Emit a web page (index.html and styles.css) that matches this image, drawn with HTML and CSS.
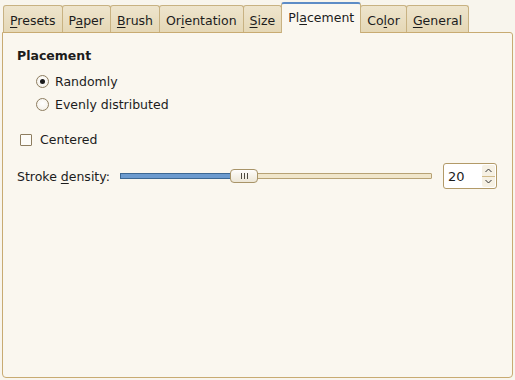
FILE: index.html
```html
<!DOCTYPE html>
<html lang="en">
<head>
    <meta charset="UTF-8">
    <title>Placement</title>
    <link rel="stylesheet" href="styles.css">
</head>
<body>

    <div class="notebook">
        <div class="tabs">
            <div class="tab"><u>P</u>resets</div>
            <div class="tab">P<u>a</u>per</div>
            <div class="tab"><u>B</u>rush</div>
            <div class="tab">Or<u>i</u>entation</div>
            <div class="tab"><u>S</u>ize</div>
            <div class="tab active">Pl<u>a</u>cement</div>
            <div class="tab">Co<u>l</u>or</div>
            <div class="tab"><u>G</u>eneral</div>
        </div>

        <div class="page">
            <div class="section-title">Placement</div>

            <div class="radio-group">
                <label class="radio checked"><span class="radio-mark"></span>Randomly</label>
                <label class="radio"><span class="radio-mark"></span>Evenly distributed</label>
            </div>

            <label class="check"><span class="check-mark"></span>Centered</label>

            <div class="density-row">
                <span class="density-label">Stroke <u>d</u>ensity:</span>
                <div class="slider">
                    <div class="trough">
                        <div class="trough-fill" style="width: 113px"></div>
                    </div>
                    <div class="handle" style="left: 110px">
                        <span class="grip"></span><span class="grip"></span><span class="grip"></span>
                    </div>
                </div>
                <div class="spin">
                    <span class="spin-value">20</span>
                    <div class="spin-buttons">
                        <span class="spin-btn">
                            <svg width="7" height="5" viewBox="0 0 7 5"><path d="M0.5 4 L3.5 1 L6.5 4" fill="none" stroke="#333" stroke-width="1"/></svg>
                        </span>
                        <span class="spin-btn down">
                            <svg width="7" height="5" viewBox="0 0 7 5"><path d="M0.5 1 L3.5 4 L6.5 1" fill="none" stroke="#333" stroke-width="1"/></svg>
                        </span>
                    </div>
                </div>
            </div>
        </div>
    </div>

</body>
</html>
```

FILE: styles.css
```css
body {
    margin: 0;
    background-color: #f8f5ed;
    font-family: "DejaVu Sans", sans-serif;
    font-size: 12.5px;
    color: #1c1c1c;
}
u {
    text-decoration-thickness: 1px;
    text-underline-offset: 2px;
}
.notebook {
    padding: 2px 2px 0 2px;
}

/* tab strip */
.tabs {
    display: flex;
    align-items: flex-end;
    height: 31px;
    margin-left: 1px;
    margin-bottom: -1px;
    position: relative;
    z-index: 1;
}
.tab {
    line-height: 16px;
    padding: 7px 6px 3px 6px;
    margin-bottom: 1px;
    border: 1px solid #c8b282;
    border-bottom: none;
    border-radius: 3px 3px 0 0;
    background: linear-gradient(#eee5cd, #e5d8b6);
    white-space: nowrap;
}
.tab + .tab {
    margin-left: -1px;
}
.tab.active {
    padding: 6px 6px 7px 6px;
    margin-bottom: 0;
    border-top: 2px solid #5d8cc6;
    background: #faf7ef;
    position: relative;
}

/* page */
.page {
    box-sizing: border-box;
    height: 346px;
    border: 1px solid #c8ab72;
    border-radius: 0 3px 4px 4px;
    background-color: #faf7ef;
    padding: 15px 14px 0 14px;
}
.section-title {
    font-weight: bold;
    line-height: 16px;
}
.radio-group {
    margin-top: 6px;
    margin-left: 19px;
}
.radio, .check {
    display: flex;
    align-items: center;
    height: 23px;
}
.radio-mark {
    box-sizing: border-box;
    width: 13px;
    height: 13px;
    margin-right: 6px;
    border: 1px solid #8d7d5f;
    border-radius: 50%;
    background: radial-gradient(circle at 50% 40%, #ffffff, #f1ede3);
    display: flex;
    align-items: center;
    justify-content: center;
}
.radio.checked .radio-mark::after {
    content: "";
    width: 5px;
    height: 5px;
    border-radius: 50%;
    background: #1a1a1a;
}
.check {
    margin-top: 12px;
    margin-left: 3px;
}
.check-mark {
    box-sizing: border-box;
    width: 12px;
    height: 12px;
    margin-right: 8px;
    border: 1px solid #8d7d5f;
    border-radius: 1px;
    background: #fdfcf8;
}

/* density row */
.density-row {
    display: flex;
    align-items: center;
    height: 26px;
    margin-top: 12px;
}
.density-label {
    width: 103px;
}
.slider {
    flex: 1;
    position: relative;
    height: 14px;
    display: flex;
    align-items: center;
}
.trough {
    box-sizing: border-box;
    width: 100%;
    height: 6px;
    border: 1px solid #b7a274;
    border-radius: 1px;
    background: #f0e6cb;
}
.trough-fill {
    box-sizing: border-box;
    height: 6px;
    margin: -1px 0 0 -1px;
    border: 1px solid #3d6893;
    background: #6c9bcf;
}
.handle {
    position: absolute;
    top: 0;
    box-sizing: border-box;
    width: 28px;
    height: 14px;
    border: 1px solid #a89468;
    border-radius: 4px;
    background: linear-gradient(#fefdfb, #ece6d6);
    display: flex;
    justify-content: center;
    align-items: center;
    gap: 2px;
}
.grip {
    width: 1px;
    height: 6px;
    background: #4e4a40;
}
.spin {
    box-sizing: border-box;
    width: 54px;
    height: 26px;
    margin-left: 11px;
    margin-right: 1px;
    border: 1px solid #b29a68;
    border-radius: 3px;
    background: #ffffff;
    display: flex;
    align-items: center;
}
.spin-value {
    flex: 1;
    padding-left: 4px;
    font-size: 13px;
}
.spin-buttons {
    width: 13px;
    height: 22px;
    margin-right: 1px;
    display: flex;
    flex-direction: column;
    background: #f6f1e4;
    border-radius: 2px;
}
.spin-btn {
    flex: 1;
    display: flex;
    align-items: center;
    justify-content: center;
}
.spin-btn.down {
    border-top: 1px solid #d2bb8a;
}
```
